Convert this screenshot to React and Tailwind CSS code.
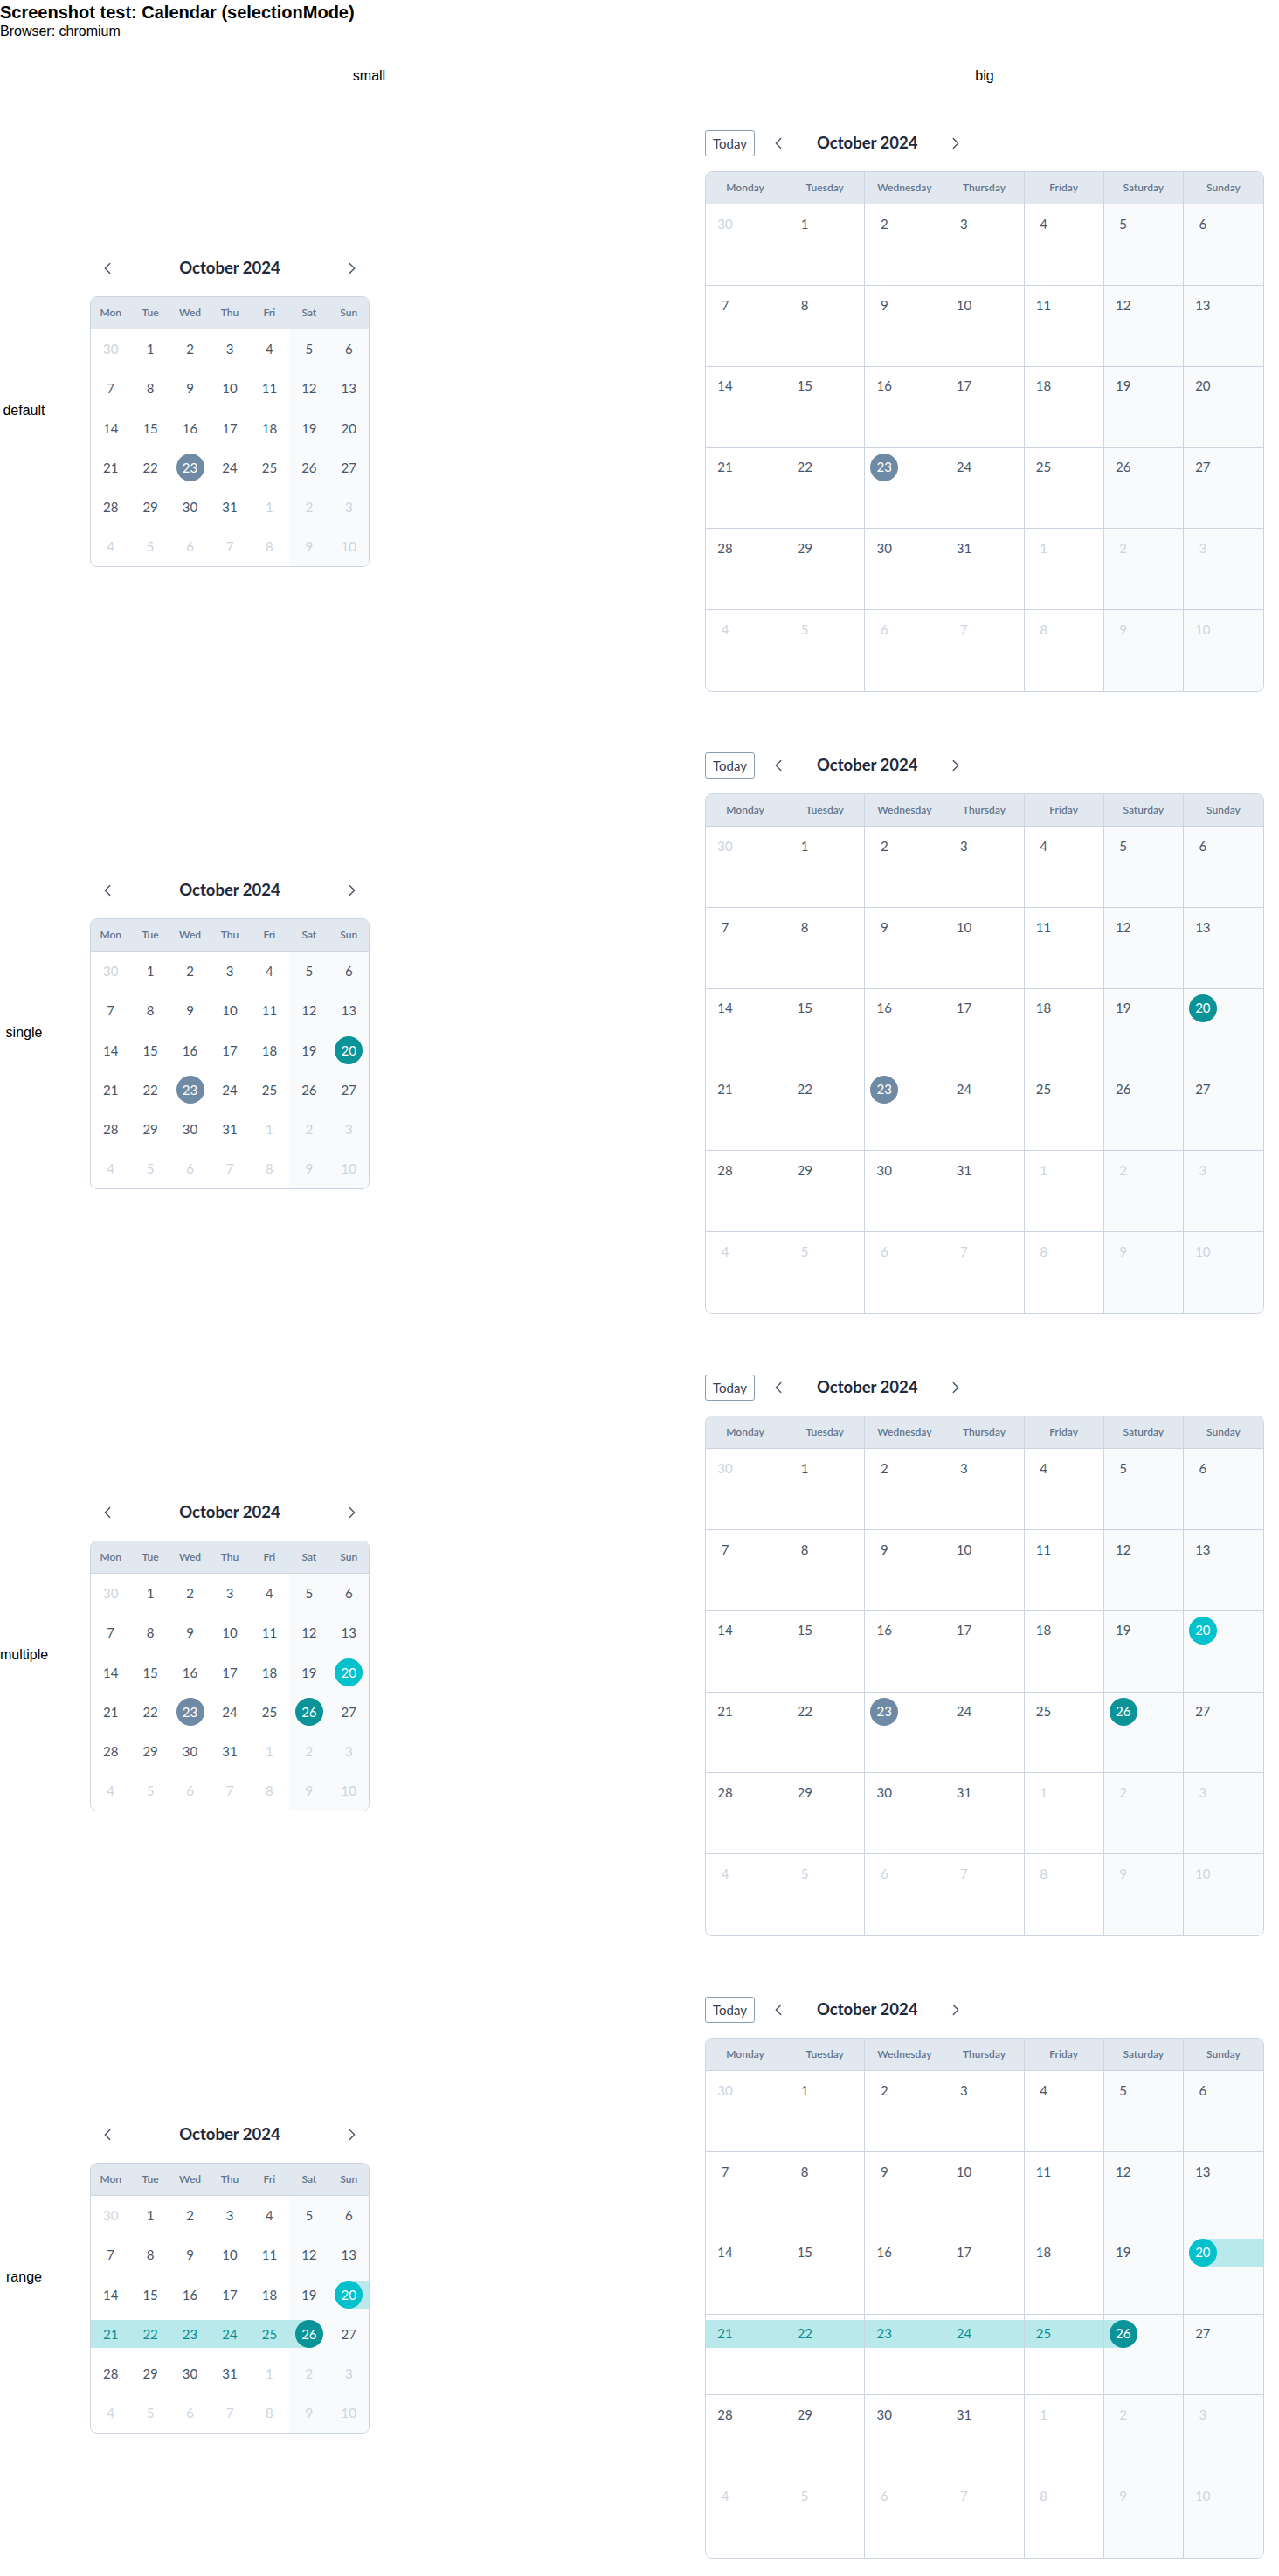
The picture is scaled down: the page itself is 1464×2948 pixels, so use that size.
import React from 'react';
import { ChevronLeft, ChevronRight } from 'lucide-react';

const DAYS = (() => {
  const arr = [{ d: 30, out: true }];
  for (let i = 1; i <= 31; i++) arr.push({ d: i, out: false });
  for (let i = 1; i <= 10; i++) arr.push({ d: i, out: true });
  return arr;
})();

const SHORT = ['Mon', 'Tue', 'Wed', 'Thu', 'Fri', 'Sat', 'Sun'];
const LONG = ['Monday', 'Tuesday', 'Wednesday', 'Thursday', 'Friday', 'Saturday', 'Sunday'];

function getKind(mode, d, out) {
  if (out) return 'out';
  if (mode === 'range') {
    if (d === 20) return 'rangeStart';
    if (d === 26) return 'rangeEnd';
    if (d > 20 && d < 26) return 'rangeMid';
  }
  if (mode === 'single' && d === 20) return 'teal';
  if (mode === 'multiple' && d === 20) return 'cyan';
  if (mode === 'multiple' && d === 26) return 'teal';
  if (d === 23) return 'today';
  return 'normal';
}

const circleCls = {
  out: 'text-[#cbd5e1]',
  normal: 'text-[#475569]',
  today: 'bg-[#6f8aa4] text-white',
  teal: 'bg-[#0b9497] text-white',
  cyan: 'bg-[#00c1cc] text-white',
  rangeStart: 'bg-[#00c1cc] text-white',
  rangeEnd: 'bg-[#0b9497] text-white',
  rangeMid: 'text-[#0b8d91]',
};

function SmallCell({ day, idx, mode }) {
  const col = idx % 7;
  const weekend = col >= 5;
  const kind = getKind(mode, day.d, day.out);
  let band = '';
  if (kind === 'rangeMid') band = 'bg-[#b9e9eb]';
  if (kind === 'rangeStart') band = 'bg-[linear-gradient(to_right,transparent_50%,#b9e9eb_50%)]';
  if (kind === 'rangeEnd') band = 'bg-[linear-gradient(to_right,#b9e9eb_50%,transparent_50%)]';
  return (
    <div className={`flex items-center ${weekend ? 'bg-[#f8fafc]' : ''}`}>
      <div className={`flex h-8 w-full items-center justify-center ${band}`}>
        <span className={`flex h-8 w-8 items-center justify-center rounded-full text-[15px] ${circleCls[kind]}`}>
          {day.d}
        </span>
      </div>
    </div>
  );
}

function SmallCal({ mode }) {
  return (
    <div className="flex w-[320px] flex-col gap-4 font-['Lato','Noto_Sans',sans-serif]">
      <div className="flex h-8 items-center justify-between px-1">
        <button className="flex h-8 w-8 items-center justify-center text-[#475569]">
          <ChevronLeft size={22} strokeWidth={1.5} />
        </button>
        <div className="text-[18.5px] font-bold text-[#1e293b]">October 2024</div>
        <button className="flex h-8 w-8 items-center justify-center text-[#475569]">
          <ChevronRight size={22} strokeWidth={1.5} />
        </button>
      </div>
      <div className="overflow-hidden rounded-lg border border-[#cbd5e1]">
        <div className="grid h-[37px] grid-cols-7 items-center border-b border-[#cbd5e1] bg-[#e2e8f0]">
          {SHORT.map((s) => (
            <div key={s} className="text-center text-[12px] font-semibold text-[#64748b]">
              {s}
            </div>
          ))}
        </div>
        <div className="grid h-[271px] grid-cols-7 grid-rows-6">
          {DAYS.map((day, i) => (
            <SmallCell key={i} day={day} idx={i} mode={mode} />
          ))}
        </div>
      </div>
    </div>
  );
}

function BigCell({ day, idx, mode }) {
  const col = idx % 7;
  const row = Math.floor(idx / 7);
  const weekend = col >= 5;
  const kind = getKind(mode, day.d, day.out);
  let band = '';
  if (kind === 'rangeMid') band = 'bg-[#b9e9eb]';
  if (kind === 'rangeStart') band = 'bg-[linear-gradient(to_right,transparent_22px,#b9e9eb_22px)]';
  if (kind === 'rangeEnd') band = 'bg-[linear-gradient(to_right,#b9e9eb_22px,transparent_22px)]';
  return (
    <div
      className={`pt-[6px] ${weekend ? 'bg-[#f8fafc]' : ''} ${col < 6 ? 'border-r border-[#cbd5e1]' : ''} ${
        row < 5 ? 'border-b border-[#cbd5e1]' : ''
      }`}
    >
      <div className={`flex h-8 w-full pl-[6px] ${band}`}>
        <span className={`flex h-8 w-8 items-center justify-center rounded-full text-[15px] ${circleCls[kind]}`}>
          {day.d}
        </span>
      </div>
    </div>
  );
}

function BigCal({ mode }) {
  return (
    <div className="flex w-[640px] flex-col gap-4 font-['Lato','Noto_Sans',sans-serif]">
      <div className="flex h-8 items-center">
        <button className="flex h-[30px] items-center rounded-[3px] border border-[#8a9fb3] px-2 text-[15px] text-[#334155]">
          Today
        </button>
        <button className="ml-[11px] flex h-8 w-8 items-center justify-center text-[#475569]">
          <ChevronLeft size={22} strokeWidth={1.5} />
        </button>
        <div className="ml-[28px] text-[18.5px] font-bold text-[#1e293b]">October 2024</div>
        <button className="ml-[28px] flex h-8 w-8 items-center justify-center text-[#475569]">
          <ChevronRight size={22} strokeWidth={1.5} />
        </button>
      </div>
      <div className="overflow-hidden rounded-lg border border-[#cbd5e1]">
        <div className="grid h-[37px] grid-cols-7 border-b border-[#cbd5e1] bg-[#e2e8f0]">
          {LONG.map((s, i) => (
            <div
              key={s}
              className={`flex items-center justify-center text-[12px] font-semibold text-[#64748b] ${
                i < 6 ? 'border-r border-[#cbd5e1]' : ''
              }`}
            >
              {s}
            </div>
          ))}
        </div>
        <div className="grid h-[557px] grid-cols-7 grid-rows-6">
          {DAYS.map((day, i) => (
            <BigCell key={i} day={day} idx={i} mode={mode} />
          ))}
        </div>
      </div>
    </div>
  );
}

const MODES = ['default', 'single', 'multiple', 'range'];

export default function App() {
  return (
    <div className="w-[1464px] pb-5 font-['Liberation_Sans',Arial,sans-serif] text-black">
      <h1 className="text-xl font-bold leading-7">Screenshot test: Calendar (selectionMode)</h1>
      <p className="text-base leading-4">Browser: chromium</p>
      <div className="mt-[31px] grid h-6 grid-cols-[55px_735px_674px] text-base leading-6">
        <div />
        <div className="text-center">small</div>
        <div className="text-center">big</div>
      </div>
      <div className="mt-[49px] flex flex-col gap-[68px]">
        {MODES.map((m) => (
          <div key={m} className="grid grid-cols-[55px_735px_674px] items-center">
            <div className="text-center text-base">{m}</div>
            <div className="pl-[48px]">
              <SmallCal mode={m} />
            </div>
            <div className="flex justify-center">
              <BigCal mode={m} />
            </div>
          </div>
        ))}
      </div>
    </div>
  );
}
